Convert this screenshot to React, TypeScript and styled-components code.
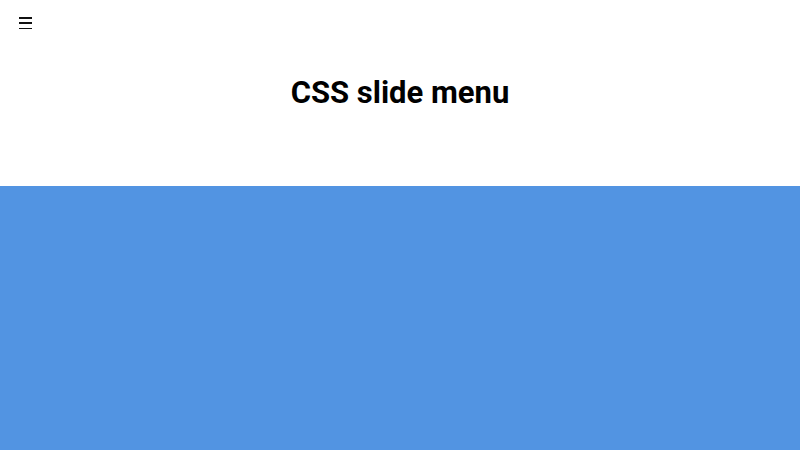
import styled, { createGlobalStyle } from 'styled-components';

const GlobalStyle = createGlobalStyle`
  html, body {
    margin: 0;
    padding: 0;
    background: #ffffff;
    font-family: Roboto, "Liberation Sans", sans-serif;
  }
`;

const Page = styled.div`
  display: flex;
  flex-direction: column;
  height: 450px;
`;

const Header = styled.header`
  height: 186px;
  display: flex;
  flex-direction: column;
  padding: 17px 0 0 19px;
  box-sizing: border-box;
`;

const MenuButton = styled.button`
  width: 14px;
  height: 12px;
  padding: 0;
  border: none;
  background: none;
  display: flex;
  flex-direction: column;
  justify-content: space-between;
  cursor: pointer;
`;

const Bar = styled.span`
  display: block;
  width: 13px;
  height: 1.5px;
  background: #111;
`;

const Title = styled.h1`
  margin: 45px 19px 0 0;
  text-align: center;
  font-size: 31px;
  font-weight: 700;
  color: #000;
`;

const Content = styled.main`
  flex: 1;
  background: #5294e2;
`;

export default function App() {
  return (
    <Page>
      <GlobalStyle />
      <Header>
        <MenuButton aria-label="menu">
          <Bar />
          <Bar />
          <Bar />
        </MenuButton>
        <Title>CSS slide menu</Title>
      </Header>
      <Content />
    </Page>
  );
}
